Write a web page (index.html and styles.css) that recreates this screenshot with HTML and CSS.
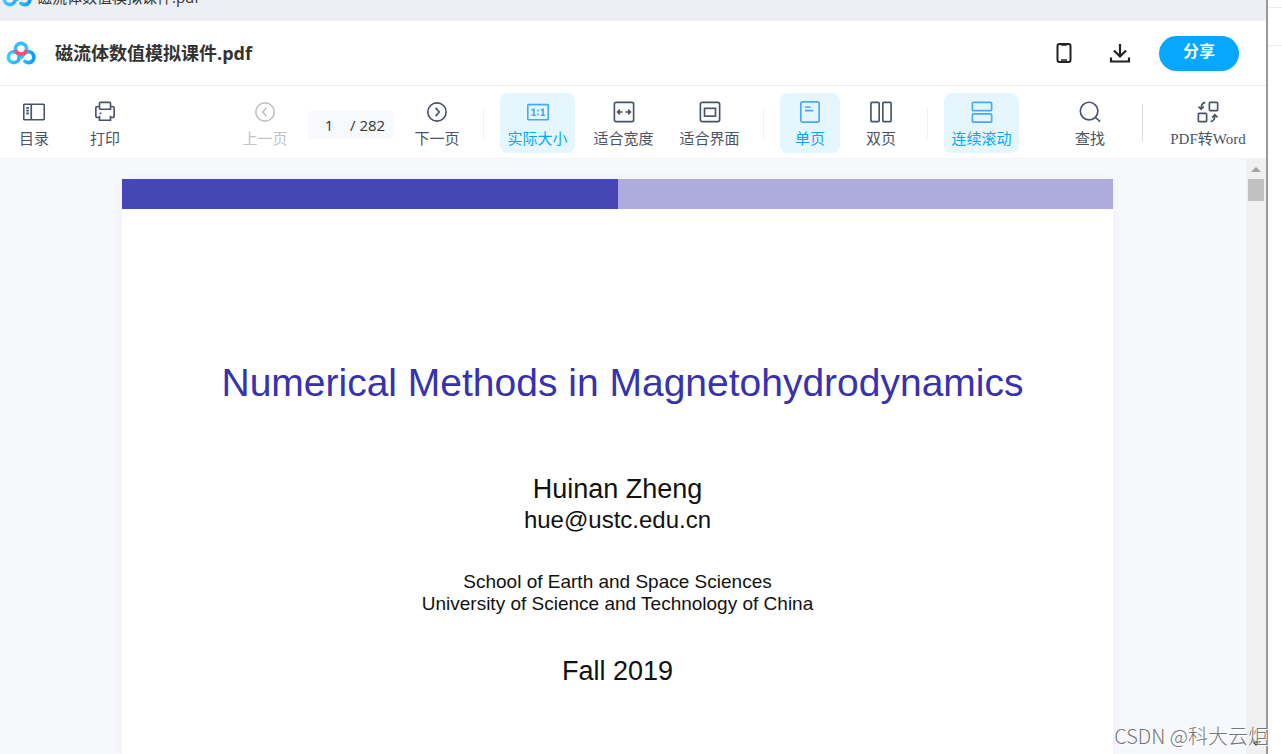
FILE: index.html
```html
<!DOCTYPE html>
<html lang="zh-CN">
<head>
<meta charset="utf-8">
<title>磁流体数值模拟课件.pdf</title>
<link rel="stylesheet" href="styles.css">
</head>
<body>
<svg class="defs" aria-hidden="true">
  <defs>
    <linearGradient id="blue-left" x1="0" y1="0" x2="1" y2="0"><stop offset="0" stop-color="#38ccff"/><stop offset="1" stop-color="#2fa8ff"/></linearGradient>
    <linearGradient id="blue-right" x1="0" y1="0" x2="1" y2="0"><stop offset="0" stop-color="#37c4ff"/><stop offset="1" stop-color="#0a9dff"/></linearGradient>
    <symbol id="logo" viewBox="0 0 30 24">
      <g fill="none" stroke-width="3.600" stroke-linecap="round">
        <circle cx="7.8" cy="16.2" r="5.400" stroke="url(#blue-left)"/>
        <path d="M19 20.400Q20.500 21.600 22.500 21.600A5.400 5.400 0 1 0 18 13.200L15 16.500" stroke="url(#blue-right)"/>
        <circle cx="15" cy="8" r="5.600" stroke="#38bdff"/>
        <path d="M9.600 9A5.600 5.600 0 0 0 20.400 9" stroke="#ff4d6d" stroke-linecap="butt"/>
      </g>
    </symbol>
  </defs>
</svg>
<div class="window">
  <div class="app">
    <div class="tabs">
      <svg class="logo" aria-hidden="true"><use href="#logo"/></svg>
      <span>磁流体数值模拟课件.pdf</span>
    </div>
    <header class="header">
      <svg class="logo" aria-hidden="true"><use href="#logo"/></svg>
      <h1 class="filename">磁流体数值模拟课件.pdf</h1>
      <button class="icon-button" aria-label="手机"><svg width="24" height="24" viewBox="0 0 24 24"><rect x="5.500" y="3" width="13" height="18" rx="2" fill="none" stroke="#222" stroke-width="2"/><path d="M9 4H15M9 19H15" stroke="#222" stroke-width="1.600"/></svg></button>
      <button class="icon-button" aria-label="下载"><svg width="24" height="24" viewBox="0 0 24 24"><path d="M12 3V15M6 9.500L12 15.500L18 9.500M3 16.500V20.500H21V16.500" fill="none" stroke="#222" stroke-width="2.200"/></svg></button>
      <button class="share">分享</button>
    </header>
    <nav class="toolbar">
      <div class="group">
        <button class="tool"><svg viewBox="0 0 24 24"><rect x="0.800" y="3.500" width="22.400" height="17" rx="1"/><path d="M9 4V20M3.500 7.500H6.500M3.500 10.500H6.500M3.500 13.500H6.500"/></svg>目录</button>
        <button class="tool"><svg viewBox="0 0 24 24"><path d="M6 9V2.500Q6 1.500 7 1.500H17Q18 1.500 18 2.500V9H6M6 18H4Q2 18 2 16V8Q2 6 4 6H6M18 6H20Q22 6 22 8V16Q22 18 20 18H18M6 16V21H18V16M6 13.500H8"/></svg>打印</button>
      </div>
      <div class="group nav">
        <button class="tool" disabled><svg viewBox="0 0 24 24"><circle cx="12" cy="12" r="10"/><path d="M13.500 7.500L9.500 12L13.500 16.500"/></svg>上一页</button>
        <label class="pager"><input class="page-input" value="1" aria-label="页码"><span>/ 282</span></label>
        <button class="tool"><svg viewBox="0 0 24 24"><circle cx="12" cy="12" r="10"/><path d="M10.500 7.500L14.500 12L10.500 16.500"/></svg>下一页</button>
      </div>
      <span class="divider"></span>
      <div class="group">
        <button class="tool wide active"><svg viewBox="0 0 24 24"><rect x="0.800" y="4" width="22.400" height="16.500" rx="1"/><path d="M5 10L7.500 9V15.500M5 15.500H9.500M15 10L17.500 9V15.500M15 15.500H19.500M12 9.500V11.500M12 13.500V15.500"/></svg>实际大小</button>
        <button class="tool wide"><svg viewBox="0 0 24 24"><rect x="1.500" y="1.500" width="21" height="21" rx="2"/><path d="M5 12H10.500M13.500 12H19M7.500 9.500L5 12L7.500 14.500M16.500 9.500L19 12L16.500 14.500"/></svg>适合宽度</button>
        <button class="tool wide"><svg viewBox="0 0 24 24"><rect x="1.500" y="1.500" width="21" height="21" rx="2"/><rect x="6" y="8" width="12" height="8.500"/></svg>适合界面</button>
      </div>
      <span class="divider"></span>
      <div class="group">
        <button class="tool active"><svg viewBox="0 0 24 24"><rect x="2" y="1" width="20" height="22" rx="2"/><path d="M6.500 6.500H12.500M6.500 10.500H15.500"/></svg>单页</button>
        <button class="tool"><svg viewBox="0 0 24 24"><rect x="1" y="1.500" width="9" height="21" rx="1"/><rect x="14" y="1.500" width="9" height="21" rx="1"/></svg>双页</button>
      </div>
      <span class="divider"></span>
      <button class="tool wide active"><svg viewBox="0 0 24 24"><rect x="1.500" y="1.500" width="21" height="9" rx="1"/><rect x="1.500" y="14" width="21" height="9" rx="1"/></svg>连续滚动</button>
      <button class="tool find"><svg viewBox="0 0 24 24"><circle cx="11" cy="11" r="9.600"/><path d="M18 18L23 22.500"/></svg>查找</button>
      <span class="divider strong"></span>
      <button class="tool convert"><svg viewBox="0 0 24 24"><rect x="13.500" y="1.500" width="9" height="9" rx="1"/><rect x="1.500" y="13.500" width="9" height="9" rx="1"/><path d="M9 1.500Q4.500 2.500 4.500 8.500M1.500 6L4.500 9L7.500 6M15 22.500Q19.500 21.500 19.500 15.500M16.500 18L19.500 15L22.500 18"/></svg>PDF转Word</button>
    </nav>
    <main class="viewer">
      <div class="canvas">
        <article class="page">
          <div class="band"><span></span><span></span></div>
          <h2 class="title">Numerical Methods in Magnetohydrodynamics</h2>
          <p class="author">Huinan Zheng</p>
          <p class="email">hue@ustc.edu.cn</p>
          <p class="school">School of Earth and Space Sciences<br>University of Science and Technology of China</p>
          <p class="date">Fall 2019</p>
        </article>
      </div>
      <div class="scrollbar">
        <svg width="10" height="5" viewBox="0 0 10 5"><path d="M0 5L5 0L10 5Z" fill="#a3a3a3"/></svg>
        <div class="thumb"></div>
        <svg class="down" width="10" height="5" viewBox="0 0 10 5"><path d="M0 0L5 5L10 0Z" fill="#505050"/></svg>
      </div>
    </main>
  </div>
  <aside class="backdrop"><div></div><div></div></aside>
  <div class="watermark">CSDN @科大云炬</div>
</div>
</body>
</html>
```

FILE: styles.css
```css
* { box-sizing: border-box; }
body { margin: 0; overflow: hidden; font-family: "Liberation Sans", "Noto Sans CJK SC", sans-serif; color: #333; }
h1, h2, p { margin: 0; font-weight: 400; }
button { border: 0; padding: 0; background: none; font: inherit; color: inherit; }
.defs { position: absolute; width: 0; height: 0; }
.window { position: relative; display: flex; height: 100vh; background: #fff; }
.app { flex: 1; min-width: 0; display: flex; flex-direction: column; border-right: 2px solid #999; }
.tabs { height: 21px; flex: none; display: flex; align-items: flex-end; gap: 5px; padding: 0 0 14px 2px; overflow: hidden; background: #eeeff4; font: 15px/20px "Open Sans", "Noto Sans CJK SC", sans-serif; }
.logo { width: 30px; height: 24px; flex: none; }
.header { height: 65px; flex: none; display: flex; align-items: center; padding: 0 27px 0 6px; border-bottom: 1px solid #ebecee; }
.filename { flex: 1; padding-left: 19px; font: bold 18px/24px "Open Sans", "Noto Sans CJK SC", sans-serif; }
.icon-button { display: flex; margin-right: 32px; }
.share { width: 80px; height: 35px; border-radius: 18px; background: #06a7ff; color: #fff; font-size: 16px; font-weight: 700; line-height: 24px; padding-bottom: 3px; }
.icon-button + .share { margin-left: -5px; }
.toolbar { height: 73px; flex: none; display: flex; align-items: center; padding: 2px 10px 0 4px; border-bottom: 1px solid #f3f4f7; }
.group { display: flex; align-items: center; gap: 11px; }
.nav { gap: 13px; margin-left: auto; }
.tool { min-width: 60px; height: 60px; flex: none; display: flex; flex-direction: column; align-items: center; gap: 5px; padding-top: 8px; border-radius: 8px; color: #495366; font: 15px/22px "Liberation Serif", "Noto Sans CJK SC", sans-serif; white-space: nowrap; }
.tool svg { width: 22px; height: 22px; fill: none; stroke: currentColor; stroke-width: 1.8; }
.tool:disabled { color: #c3c3c5; }
.wide { width: 75px; }
.active { background: #e5f6ff; color: #06a7ff; }
.active svg { stroke: #45a9ff; }
.find { margin-left: 41px; }
.convert { width: 96px; }
.divider { width: 1px; height: 30px; flex: none; margin: 0 16px; background: #eff0f5; }
.strong { height: 38px; margin: 0 17px 0 22px; background: #dcdde0; }
.pager { width: 86px; height: 28px; display: flex; align-items: center; border-radius: 4px; background: #f7f9fc; font: 15px/20px "Open Sans", sans-serif; margin-top: 4px; }
.page-input { width: 42px; border: 0; padding: 0; background: none; color: inherit; font: inherit; text-align: center; }
.viewer { flex: 1; min-height: 0; display: flex; background: #f7f8fc; }
.canvas { flex: 1; overflow: hidden; padding: 20px 133px 0 122px; }
.page { height: 100%; background: #fff; color: #111; text-align: center; box-shadow: 0 0 8px #eef0f6; }
.band { display: flex; height: 30px; background: #aeabdf; }
.band span { flex: 1; }
.band span:first-child { background: #4746b7; }
.title { padding: 150px 0 0 10px; color: #3732ad; font-size: 39px; line-height: 48px; }
.author { padding-top: 66px; font-size: 27px; line-height: 32px; }
.email { font-size: 24px; line-height: 30px; }
.school { padding-top: 36px; font-size: 19px; line-height: 22px; }
.date { padding-top: 40px; font-size: 27px; line-height: 32px; }
.scrollbar { width: 20px; display: flex; flex-direction: column; align-items: center; padding: 8px 0; background: #f0f0f0; }
.thumb { width: 16px; height: 22px; margin-top: 7px; background: #c1c1c1; }
.down { margin-top: auto; }
.backdrop { width: 14px; }
.backdrop div { height: 8px; border-bottom: 1px solid #ececf0; }
.backdrop div + div { height: 38px; }
.watermark { position: absolute; right: 14px; bottom: 4px; font: 300 20px/28px "Noto Sans CJK SC", sans-serif; color: #777; text-shadow: 1px 1px 0 #fff; }
```
